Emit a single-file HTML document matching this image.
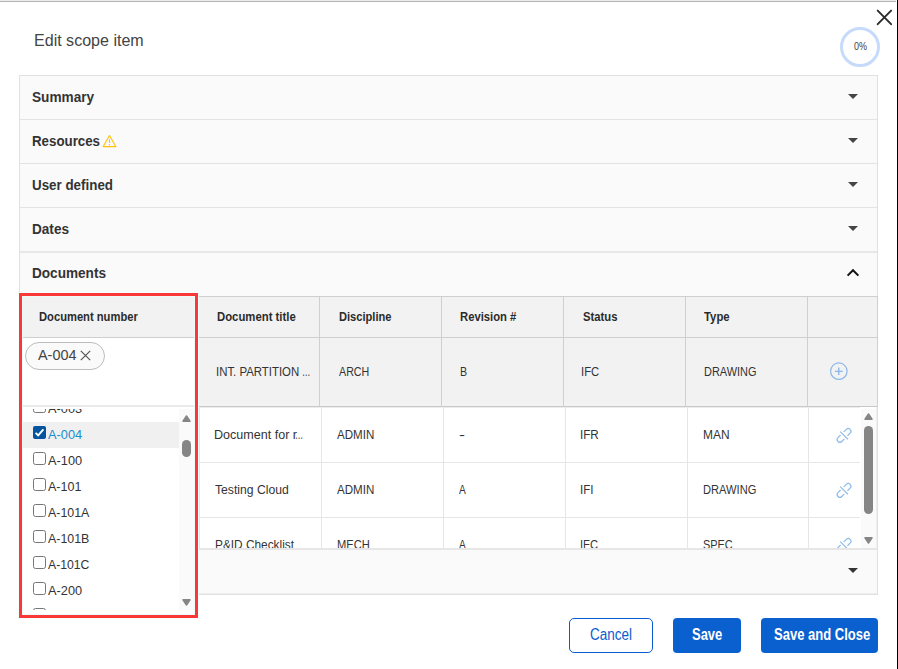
<!DOCTYPE html>
<html lang="en"><head><meta charset="utf-8"><title>Edit scope item</title>
<style>
html,body{margin:0;padding:0}
body{width:898px;height:669px;position:relative;overflow:hidden;background:#fff;font-family:"Liberation Sans",sans-serif}
.t{position:absolute;white-space:nowrap;transform-origin:0 50%;display:block}
.a{position:absolute;box-sizing:border-box}
svg{position:absolute;overflow:visible}
</style></head><body>
<!-- window chrome -->
<div class="a" style="left:0;top:0;width:896px;height:1px;background:#ececec"></div>
<div class="a" style="left:0;top:1px;width:896px;height:1px;background:#b4b4b4"></div>
<div class="a" style="left:897px;top:0;width:1px;height:669px;background:#000"></div>
<!-- close -->
<svg style="left:876px;top:9px" width="17" height="17" viewBox="0 0 17 17"><path d="M1.7 1.6 L15.1 15.2 M15.1 1.6 L1.7 15.2" stroke="#2b2b2b" stroke-width="1.9" stroke-linecap="round" fill="none"/></svg>
<!-- progress ring -->
<div class="a" style="left:840px;top:27px;width:40px;height:40px;border:3px solid #c6dbfb;border-radius:50%"></div>
<!-- accordion panel -->
<div class="a" style="left:19px;top:75px;width:859px;height:520px;border:1px solid #e1e1e1;background:#fafafa"></div>
<div class="a" style="left:20px;top:119px;width:857px;height:1px;background:#e3e3e3"></div>
<div class="a" style="left:20px;top:163px;width:857px;height:1px;background:#e3e3e3"></div>
<div class="a" style="left:20px;top:207px;width:857px;height:1px;background:#e3e3e3"></div>
<div class="a" style="left:20px;top:251px;width:857px;height:2px;background:#e7e7e7"></div>
<!-- accordion arrows -->
<svg style="left:848px;top:94px" width="10" height="5"><path d="M0 0H10L5 5Z" fill="#444"/></svg>
<svg style="left:848px;top:138px" width="10" height="5"><path d="M0 0H10L5 5Z" fill="#444"/></svg>
<svg style="left:848px;top:182px" width="10" height="5"><path d="M0 0H10L5 5Z" fill="#444"/></svg>
<svg style="left:848px;top:226px" width="10" height="5"><path d="M0 0H10L5 5Z" fill="#444"/></svg>
<svg style="left:848px;top:568px" width="10" height="5"><path d="M0 0H10L5 5Z" fill="#333"/></svg>
<svg style="left:846px;top:268px" width="14" height="9"><path d="M1.6 7.6L7 2.2L12.4 7.6" stroke="#111" stroke-width="2" fill="none"/></svg>
<!-- warning icon -->
<svg style="left:102px;top:134px" width="15" height="14" viewBox="0 0 15 14"><path d="M7.5 1.6L13.8 12.6H1.2Z" fill="none" stroke="#ffc107" stroke-width="1.1" stroke-linejoin="round"/><path d="M7.5 5.2V9" stroke="#ffc107" stroke-width="1.1"/><circle cx="7.5" cy="10.7" r="0.7" fill="#ffc107"/></svg>

<!-- grid header + edit row -->
<div class="a" style="left:20px;top:296px;width:857px;height:111px;background:#f2f2f2"></div>
<div class="a" style="left:20px;top:296px;width:857px;height:1px;background:#cfcfcf"></div>
<div class="a" style="left:20px;top:337px;width:857px;height:1px;background:#cfcfcf"></div>
<div class="a" style="left:20px;top:406px;width:857px;height:1px;background:#c8c8c8"></div>
<div class="a" style="left:319px;top:296px;width:1px;height:111px;background:#cfcfcf"></div>
<div class="a" style="left:441px;top:296px;width:1px;height:111px;background:#cfcfcf"></div>
<div class="a" style="left:563px;top:296px;width:1px;height:111px;background:#cfcfcf"></div>
<div class="a" style="left:685px;top:296px;width:1px;height:111px;background:#cfcfcf"></div>
<div class="a" style="left:807px;top:296px;width:1px;height:111px;background:#cfcfcf"></div>
<div class="a" style="left:877px;top:296px;width:1px;height:111px;background:#cfcfcf"></div>
<!-- plus icon -->
<svg style="left:830px;top:362px" width="18" height="18" viewBox="0 0 18 18"><circle cx="8.85" cy="9.2" r="8.25" fill="none" stroke="#8cb8e8" stroke-width="1.2"/><path d="M8.75 5.5V12.9M4.9 9.35H12.7" stroke="#8cb8e8" stroke-width="1.4"/></svg>

<!-- grid body -->
<div class="a" style="left:198px;top:407px;width:679px;height:141px;background:#fff;overflow:hidden">
 <div class="a" style="left:0;top:0;width:679px;height:1px;background:#ececec"></div>
 <div class="a" style="left:1px;top:1px;width:1px;height:141px;background:#e6e6e6"></div>
 <div class="a" style="left:123px;top:1px;width:1px;height:141px;background:#e6e6e6"></div>
 <div class="a" style="left:245px;top:1px;width:1px;height:141px;background:#e6e6e6"></div>
 <div class="a" style="left:367px;top:1px;width:1px;height:141px;background:#e6e6e6"></div>
 <div class="a" style="left:489px;top:1px;width:1px;height:141px;background:#e6e6e6"></div>
 <div class="a" style="left:610px;top:1px;width:1px;height:141px;background:#e6e6e6"></div>
 <div class="a" style="left:1px;top:55px;width:661px;height:1px;background:#e6e6e6"></div>
 <div class="a" style="left:1px;top:110px;width:661px;height:1px;background:#e6e6e6"></div>
 <!-- link icons -->
 <svg style="left:0;top:0" width="679" height="160"><g transform="translate(646.05 28.40) rotate(-45)" fill="none" stroke="#8dbbea" stroke-width="1.2"><path d="M2.2 -2.7H5.9A2.7 2.7 0 0 1 5.9 2.7H2.2M-2.2 -2.7H-5.9A2.7 2.7 0 0 0 -5.9 2.7H-2.2M0 -5.4V5.4"/></g></svg>
 <svg style="left:0;top:0" width="679" height="160"><g transform="translate(646.05 83.40) rotate(-45)" fill="none" stroke="#8dbbea" stroke-width="1.2"><path d="M2.2 -2.7H5.9A2.7 2.7 0 0 1 5.9 2.7H2.2M-2.2 -2.7H-5.9A2.7 2.7 0 0 0 -5.9 2.7H-2.2M0 -5.4V5.4"/></g></svg>
 <svg style="left:0;top:0" width="679" height="160"><g transform="translate(646.05 138.40) rotate(-45)" fill="none" stroke="#8dbbea" stroke-width="1.2"><path d="M2.2 -2.7H5.9A2.7 2.7 0 0 1 5.9 2.7H2.2M-2.2 -2.7H-5.9A2.7 2.7 0 0 0 -5.9 2.7H-2.2M0 -5.4V5.4"/></g></svg>
 <!-- scrollbar -->
 <div class="a" style="left:662px;top:0;width:17px;height:141px;background:#fff"></div>
 <div class="a" style="left:663px;top:2px;width:15px;height:139px;background:#fafafa"></div>
 <div class="a" style="left:678px;top:0;width:1px;height:141px;background:#eee"></div>
 <svg style="left:666px;top:6px" width="9" height="7"><path d="M1 6.2H8L4.5 1Z" fill="#858585" stroke="#858585" stroke-width="1.5" stroke-linejoin="round"/></svg>
 <div class="a" style="left:666px;top:19px;width:9px;height:88px;border-radius:4.5px;background:#858585"></div>
 <svg style="left:666px;top:130px" width="9" height="7"><path d="M1 0.8H8L4.5 6Z" fill="#858585" stroke="#858585" stroke-width="1.5" stroke-linejoin="round"/></svg>
<span class="t" style="left:15.8px;top:21.6px;font-size:12px;line-height:12px;font-weight:400;color:#333;transform:scaleX(1.0459);">Document for r</span>
<span class="t" style="left:97.4px;top:21.6px;font-size:12px;line-height:12px;font-weight:400;color:#333;transform:scaleX(0.6833);">…</span>
<span class="t" style="left:139.1px;top:21.6px;font-size:12px;line-height:12px;font-weight:400;color:#333;transform:scaleX(0.9645);">ADMIN</span>
<span class="t" style="left:261.2px;top:21.6px;font-size:12px;line-height:12px;font-weight:400;color:#333;transform:scaleX(1.5000);">-</span>
<span class="t" style="left:382.4px;top:21.6px;font-size:12px;line-height:12px;font-weight:400;color:#333;transform:scaleX(0.9719);">IFR</span>
<span class="t" style="left:504.8px;top:21.6px;font-size:12px;line-height:12px;font-weight:400;color:#333;transform:scaleX(0.9973);">MAN</span>
<span class="t" style="left:17.2px;top:76.6px;font-size:12px;line-height:12px;font-weight:400;color:#333;transform:scaleX(1.0149);">Testing Cloud</span>
<span class="t" style="left:139.1px;top:76.6px;font-size:12px;line-height:12px;font-weight:400;color:#333;transform:scaleX(0.9645);">ADMIN</span>
<span class="t" style="left:261.4px;top:76.6px;font-size:12px;line-height:12px;font-weight:400;color:#333;transform:scaleX(0.8483);">A</span>
<span class="t" style="left:382.4px;top:76.6px;font-size:12px;line-height:12px;font-weight:400;color:#333;transform:scaleX(0.9643);">IFI</span>
<span class="t" style="left:504.8px;top:76.6px;font-size:12px;line-height:12px;font-weight:400;color:#333;transform:scaleX(0.9277);">DRAWING</span>
<span class="t" style="left:17.2px;top:131.6px;font-size:12px;line-height:12px;font-weight:400;color:#333;transform:scaleX(0.9871);">P&amp;ID Checklist</span>
<span class="t" style="left:139.1px;top:131.6px;font-size:12px;line-height:12px;font-weight:400;color:#333;transform:scaleX(0.9309);">MECH</span>
<span class="t" style="left:261.4px;top:131.6px;font-size:12px;line-height:12px;font-weight:400;color:#333;transform:scaleX(0.8483);">A</span>
<span class="t" style="left:382.4px;top:131.6px;font-size:12px;line-height:12px;font-weight:400;color:#333;transform:scaleX(0.9305);">IFC</span>
<span class="t" style="left:505.0px;top:131.6px;font-size:12px;line-height:12px;font-weight:400;color:#333;transform:scaleX(0.9086);">SPEC</span>
</div>
<!-- bottom accordion row top line -->
<div class="a" style="left:20px;top:548px;width:857px;height:2px;background:#e6e6e6"></div>
<div class="a" style="left:20px;top:593px;width:857px;height:1px;background:#eeeeee"></div>

<!-- dropdown under Document number -->
<div class="a" style="left:22px;top:338px;width:173px;height:277px;background:#fff"></div>
<div class="a" style="left:25px;top:342px;width:80px;height:28px;border:1px solid #bdbdbd;border-radius:14px;background:#fafafa"></div>
<svg style="left:80px;top:350px" width="11" height="11" viewBox="0 0 11 11"><path d="M0.8 0.8L10.2 10.2M10.2 0.8L0.8 10.2" stroke="#555" stroke-width="1.2" fill="none"/></svg>
<div class="a" style="left:22px;top:405px;width:173px;height:2px;background:#eaeaea"></div>
<div class="a" style="left:22px;top:409px;width:173px;height:201px;overflow:hidden;background:#fff"><div class="a" style="left:0;top:-3px;width:173px;height:211px">
 <div class="a" style="left:0;top:16px;width:157px;height:26px;background:#f0f0f0"></div>
 <!-- checkboxes -->
 <div class="a" style="left:11px;top:-6px;width:13px;height:13px;border:1px solid #767676;border-radius:2.5px;background:#fff"></div>
 <div class="a" style="left:11px;top:20px;width:13px;height:13px;border-radius:2px;background:#04549f"></div>
 <svg style="left:11px;top:20px" width="13" height="13" viewBox="0 0 13 13"><path d="M2.6 6.8L5.2 9.4L10.4 3.4" stroke="#fff" stroke-width="1.9" fill="none"/></svg>
 <div class="a" style="left:11px;top:46px;width:13px;height:13px;border:1px solid #767676;border-radius:2.5px;background:#fff"></div>
 <div class="a" style="left:11px;top:72px;width:13px;height:13px;border:1px solid #767676;border-radius:2.5px;background:#fff"></div>
 <div class="a" style="left:11px;top:98px;width:13px;height:13px;border:1px solid #767676;border-radius:2.5px;background:#fff"></div>
 <div class="a" style="left:11px;top:124px;width:13px;height:13px;border:1px solid #767676;border-radius:2.5px;background:#fff"></div>
 <div class="a" style="left:11px;top:150px;width:13px;height:13px;border:1px solid #767676;border-radius:2.5px;background:#fff"></div>
 <div class="a" style="left:11px;top:176px;width:13px;height:13px;border:1px solid #767676;border-radius:2.5px;background:#fff"></div>
 <div class="a" style="left:11px;top:202px;width:13px;height:13px;border:1px solid #767676;border-radius:2.5px;background:#fff"></div>
 <!-- scrollbar -->
 <div class="a" style="left:157px;top:0;width:16px;height:209px;background:#fafafa"></div>
 <svg style="left:160px;top:9px" width="9" height="7"><path d="M1 6.2H8L4.5 1Z" fill="#858585" stroke="#858585" stroke-width="1.5" stroke-linejoin="round"/></svg>
 <div class="a" style="left:160px;top:34px;width:9px;height:17px;border-radius:4.5px;background:#858585"></div>
 <svg style="left:160px;top:193px" width="9" height="7"><path d="M1 0.8H8L4.5 6Z" fill="#858585" stroke="#858585" stroke-width="1.5" stroke-linejoin="round"/></svg>
<span class="t" style="left:26.4px;top:-3.1px;font-size:12px;line-height:12px;font-weight:400;color:#333;transform:scaleX(1.0646);">A-003</span>
<span class="t" style="left:26.4px;top:22.9px;font-size:12px;line-height:12px;font-weight:400;color:#1a8dcb;transform:scaleX(1.0646);">A-004</span>
<span class="t" style="left:26.4px;top:48.9px;font-size:12px;line-height:12px;font-weight:400;color:#333;transform:scaleX(1.0646);">A-100</span>
<span class="t" style="left:26.4px;top:74.9px;font-size:12px;line-height:12px;font-weight:400;color:#333;transform:scaleX(1.0427);">A-101</span>
<span class="t" style="left:26.4px;top:100.9px;font-size:12px;line-height:12px;font-weight:400;color:#333;transform:scaleX(1.0342);">A-101A</span>
<span class="t" style="left:26.4px;top:126.9px;font-size:12px;line-height:12px;font-weight:400;color:#333;transform:scaleX(1.0342);">A-101B</span>
<span class="t" style="left:26.4px;top:152.9px;font-size:12px;line-height:12px;font-weight:400;color:#333;transform:scaleX(1.0175);">A-101C</span>
<span class="t" style="left:26.4px;top:178.9px;font-size:12px;line-height:12px;font-weight:400;color:#333;transform:scaleX(1.0646);">A-200</span>
<span class="t" style="left:26.4px;top:204.9px;font-size:12px;line-height:12px;font-weight:400;color:#333;transform:scaleX(1.0646);">A-201</span>
</div></div>
<!-- red highlight -->
<div class="a" style="left:19px;top:293px;width:179px;height:325px;border:3px solid #fb3838;box-shadow:0 0 0 1px #f6fefe,inset 0 0 0 1px #effbfb"></div>

<!-- buttons -->
<div class="a" style="left:569px;top:618px;width:84px;height:35px;border:1px solid #0b5cd0;border-radius:5px;background:#fff"></div>
<div class="a" style="left:673px;top:618px;width:68px;height:35px;border-radius:4px;background:#0a60cf"></div>
<div class="a" style="left:761px;top:618px;width:117px;height:35px;border-radius:4px;background:#0a60cf"></div>

<span class="t" style="left:34.0px;top:32.5px;font-size:16px;line-height:16px;font-weight:400;color:#444;transform:scaleX(1.0028);">Edit scope item</span>
<span class="t" style="left:32.0px;top:90.3px;font-size:14px;line-height:14px;font-weight:700;color:#333;transform:scaleX(0.9747);">Summary</span>
<span class="t" style="left:32.0px;top:134.3px;font-size:14px;line-height:14px;font-weight:700;color:#333;transform:scaleX(0.9498);">Resources</span>
<span class="t" style="left:32.0px;top:178.3px;font-size:14px;line-height:14px;font-weight:700;color:#333;transform:scaleX(0.9550);">User defined</span>
<span class="t" style="left:32.0px;top:222.3px;font-size:14px;line-height:14px;font-weight:700;color:#333;transform:scaleX(0.9701);">Dates</span>
<span class="t" style="left:32.0px;top:266.3px;font-size:14px;line-height:14px;font-weight:700;color:#333;transform:scaleX(0.9707);">Documents</span>
<span class="t" style="left:853.5px;top:42.0px;font-size:10px;line-height:10px;font-weight:400;color:#444;transform:scaleX(0.8995);">0%</span>
<span class="t" style="left:39.0px;top:311.0px;font-size:12px;line-height:12px;font-weight:700;color:#2b2b2b;transform:scaleX(0.9319);">Document number</span>
<span class="t" style="left:216.8px;top:311.0px;font-size:12px;line-height:12px;font-weight:700;color:#2b2b2b;transform:scaleX(0.9443);">Document title</span>
<span class="t" style="left:338.7px;top:311.0px;font-size:12px;line-height:12px;font-weight:700;color:#2b2b2b;transform:scaleX(0.9261);">Discipline</span>
<span class="t" style="left:460.3px;top:311.0px;font-size:12px;line-height:12px;font-weight:700;color:#2b2b2b;transform:scaleX(0.9378);">Revision #</span>
<span class="t" style="left:582.6px;top:311.0px;font-size:12px;line-height:12px;font-weight:700;color:#2b2b2b;transform:scaleX(0.9404);">Status</span>
<span class="t" style="left:704.1px;top:311.0px;font-size:12px;line-height:12px;font-weight:700;color:#2b2b2b;transform:scaleX(0.9438);">Type</span>
<span class="t" style="left:215.6px;top:366.0px;font-size:12px;line-height:12px;font-weight:400;color:#333;transform:scaleX(0.9502);">INT. PARTITION</span>
<span class="t" style="left:302.1px;top:366.0px;font-size:12px;line-height:12px;font-weight:400;color:#333;transform:scaleX(0.7000);">…</span>
<span class="t" style="left:338.7px;top:366.0px;font-size:12px;line-height:12px;font-weight:400;color:#333;transform:scaleX(0.8908);">ARCH</span>
<span class="t" style="left:460.3px;top:366.0px;font-size:12px;line-height:12px;font-weight:400;color:#333;transform:scaleX(0.8858);">B</span>
<span class="t" style="left:581.3px;top:366.0px;font-size:12px;line-height:12px;font-weight:400;color:#333;transform:scaleX(0.9409);">IFC</span>
<span class="t" style="left:704.1px;top:366.0px;font-size:12px;line-height:12px;font-weight:400;color:#333;transform:scaleX(0.9103);">DRAWING</span>
<span class="t" style="left:38.0px;top:347.9px;font-size:14px;line-height:14px;font-weight:400;color:#444;transform:scaleX(1.0305);">A-004</span>
<span class="t" style="left:590.0px;top:626.5px;font-size:16px;line-height:16px;font-weight:400;color:#0b5cd0;transform:scaleX(0.8432);">Cancel</span>
<span class="t" style="left:691.8px;top:626.5px;font-size:16px;line-height:16px;font-weight:700;color:#fff;transform:scaleX(0.8107);">Save</span>
<span class="t" style="left:774.0px;top:626.5px;font-size:16px;line-height:16px;font-weight:700;color:#fff;transform:scaleX(0.8133);">Save and Close</span>
</body></html>
